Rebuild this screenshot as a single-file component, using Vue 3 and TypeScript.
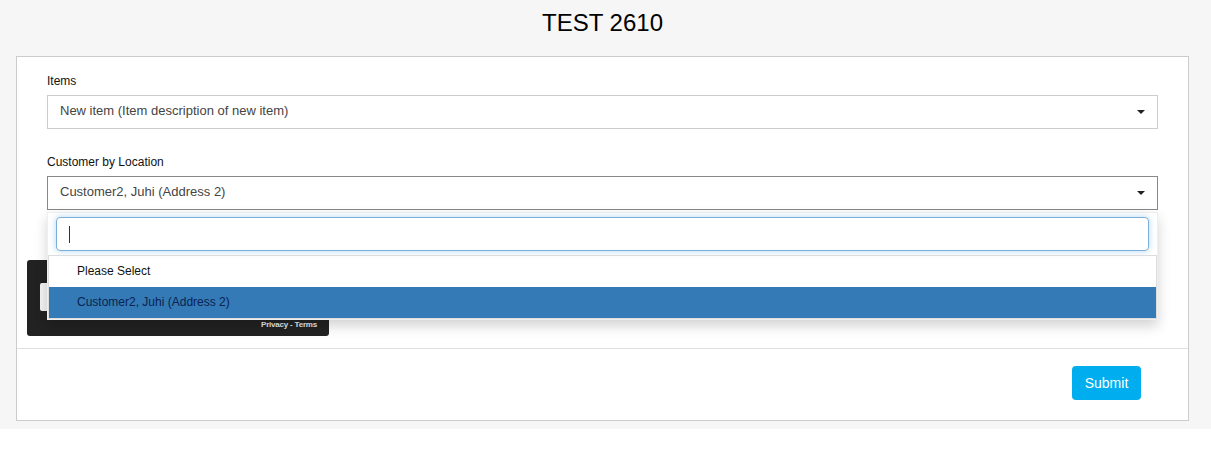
<script setup lang="ts">
const options = ['Please Select', 'Customer2, Juhi (Address 2)']
const selected = 'Customer2, Juhi (Address 2)'
</script>

<template>
  <div class="page">
    <h1 class="title">TEST 2610</h1>
    <form class="card" @submit.prevent>
      <div class="card-body">
        <div class="field">
          <label class="field-label">Items</label>
          <div class="select">
            <span class="select-text">New item (Item description of new item)</span>
            <span class="caret"></span>
          </div>
        </div>
        <div class="field field-open">
          <label class="field-label">Customer by Location</label>
          <div class="select select-open">
            <span class="select-text">{{ selected }}</span>
            <span class="caret"></span>
          </div>
          <div class="dropdown">
            <div class="search-wrap">
              <div class="search"><span class="text-cursor"></span></div>
            </div>
            <ul class="options">
              <li v-for="opt in options" :key="opt" class="option" :class="{ active: opt === selected }">{{ opt }}</li>
            </ul>
          </div>
        </div>
        <div class="recaptcha">
          <div class="recaptcha-box"></div>
          <div class="recaptcha-links">Privacy - Terms</div>
        </div>
      </div>
      <div class="card-footer">
        <button type="submit" class="submit">Submit</button>
      </div>
    </form>
  </div>
</template>

<style>
html, body {
  margin: 0;
  background: #fff;
}
</style>

<style scoped>
.page {
  box-sizing: border-box;
  height: 429px;
  padding: 0 22px 0 16px;
  background: #f6f6f6;
  font-family: "Liberation Sans", Arial, sans-serif;
}
.title {
  margin: 0;
  height: 56px;
  line-height: 46px;
  font-size: 24px;
  font-weight: 400;
  text-align: center;
  color: #000;
}
.card {
  height: 365px;
  display: flex;
  flex-direction: column;
  box-sizing: border-box;
  background: #fff;
  border: 1px solid #ccc;
}
.card-body {
  height: 292px;
  box-sizing: border-box;
  padding: 17px 30px 0;
  border-bottom: 1px solid #e0e0e0;
}
.field {
  margin-bottom: 26px;
}
.field-open {
  position: relative;
  margin-bottom: 0;
}
.field-label {
  display: block;
  height: 21px;
  line-height: 14px;
  font-size: 12px;
  color: #111;
}
.select {
  box-sizing: border-box;
  height: 34px;
  display: flex;
  align-items: center;
  justify-content: space-between;
  padding: 0 12px 4px;
  border: 1px solid #ccc;
  background: #fff;
}
.select-open {
  border-color: #888;
}
.select-text {
  font-size: 13px;
  color: #444;
}
.caret {
  width: 0;
  height: 0;
  margin-top: 4px;
  border-left: 4px solid transparent;
  border-right: 4px solid transparent;
  border-top: 4px solid #222;
}
.dropdown {
  position: absolute;
  z-index: 2;
  top: 57px;
  left: 0;
  right: 0;
  box-sizing: border-box;
  border: 1px solid #eee;
  background: #fff;
  box-shadow: 0 6px 12px rgba(0, 0, 0, 0.175);
}
.search-wrap {
  padding: 4px 8px;
}
.search {
  box-sizing: border-box;
  height: 34px;
  display: flex;
  align-items: center;
  padding: 0 12px;
  border: 1px solid #7cadd6;
  border-radius: 4px;
  box-shadow: 0 0 6px rgba(102, 175, 233, 0.5);
}
.text-cursor {
  width: 1px;
  height: 17px;
  background: #333;
}
.options {
  margin: 0;
  padding: 0;
  list-style: none;
  border: 1px solid #ddd;
}
.option {
  height: 31px;
  line-height: 30px;
  padding-left: 28px;
  font-size: 12px;
  color: #111;
}
.option.active {
  background: #337ab7;
  color: #0a2350;
}
.recaptcha {
  position: relative;
  box-sizing: border-box;
  width: 302px;
  height: 76px;
  margin: 50px 0 0 -20px;
  background: #222;
  border-radius: 3px;
}
.recaptcha-box {
  position: absolute;
  top: 23px;
  left: 13px;
  width: 40px;
  height: 28px;
  background: #f2f2f2;
  border-radius: 2px;
}
.recaptcha-links {
  position: absolute;
  right: 12px;
  bottom: 6px;
  font-size: 8px;
  line-height: 10px;
  font-weight: 700;
  letter-spacing: -0.2px;
  color: #e8e8e8;
}
.card-footer {
  flex: 1;
  display: flex;
  justify-content: flex-end;
  align-items: flex-start;
  padding: 17px 47px 0 0;
}
.submit {
  width: 69px;
  height: 34px;
  padding: 0;
  border: 0;
  border-radius: 4px;
  background: #00aeef;
  color: #fff;
  font-family: inherit;
  font-size: 14px;
}
</style>
